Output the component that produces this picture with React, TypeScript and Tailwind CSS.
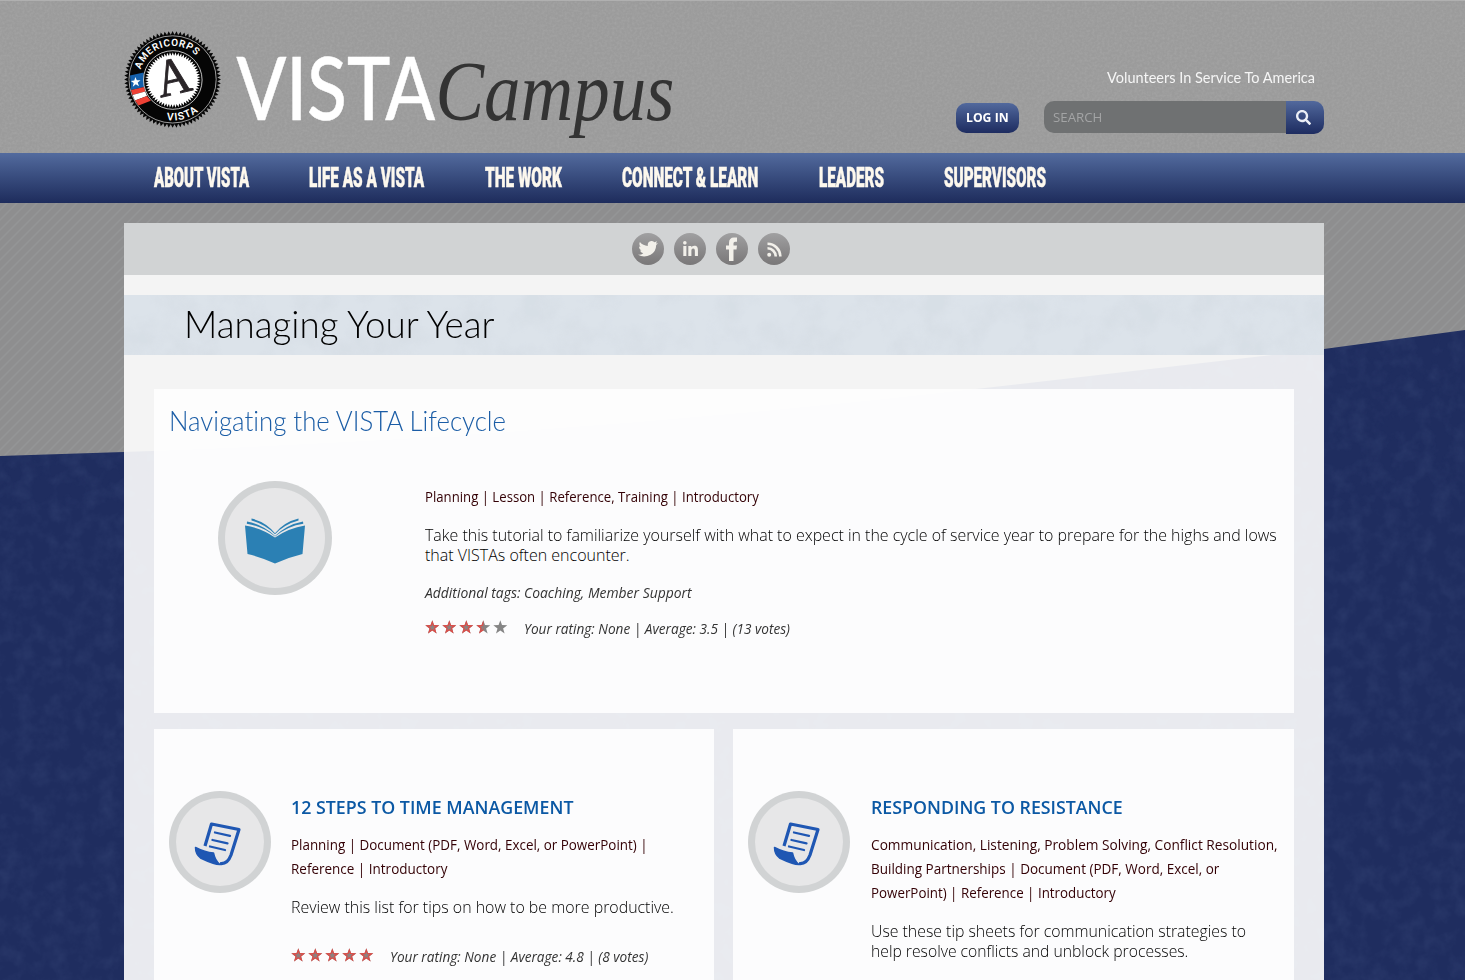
import React, { useLayoutEffect, useRef, useState } from "react";
import { FaLinkedinIn, FaSearch } from "react-icons/fa";

/** One line of text, condensed or widened to fill the given width. */
function Fit({ w, className = "", children }: { w: number; className?: string; children: string }) {
  const ref = useRef<HTMLSpanElement>(null);
  const [scale, setScale] = useState(1);
  useLayoutEffect(() => {
    if (ref.current) setScale(w / ref.current.offsetWidth);
  }, [w]);
  return (
    <span className={"block overflow-visible whitespace-nowrap " + className} style={{ width: w }}>
      <span ref={ref} className="inline-block origin-left" style={{ transform: `scaleX(${scale})` }}>
        {children}
      </span>
    </span>
  );
}

function teeth(cx: number, cy: number, r1: number, r2: number, n: number) {
  const pts: string[] = [];
  for (let i = 0; i < n * 2; i++) {
    const a = (Math.PI * i) / n;
    const r = i % 2 ? r1 : r2;
    pts.push(`${(cx + r * Math.cos(a)).toFixed(2)},${(cy + r * Math.sin(a)).toFixed(2)}`);
  }
  return pts.join(" ");
}

function Logo() {
  return (
    <svg width="580" height="130" viewBox="0 0 580 130" className="block shrink-0 overflow-visible">
      <defs>
        <path id="arcTop" d="M30.800 49.500A33.500 33.500 0 0 1 96 55" />
        <path id="arcBottom" d="M52 99.200A41.300 41.300 0 0 0 98 80" />
      </defs>
      <polygon points={teeth(62.6, 59.4, 44.8, 48.4, 76)} fill="#080808" />
      <circle cx="62.6" cy="59.4" r="43.6" fill="#050505" stroke="#ddd" strokeWidth="0.7" />
      <path d="M20 55.5L33.6 52.5L34.2 67L21 70Z" fill="#1560ab" />
      <path d="M21 70L34.2 67L35.2 71.6L22.6 75Z" fill="#ee4035" />
      <path d="M22.6 75L35.2 71.6L37 76L25 80.4Z" fill="#fff" />
      <path d="M25 80.4L37 76L40.8 80.8L28.6 85.4Z" fill="#ee4035" />
      <polygon points="25.3,57 26.8,60.2 30.5,60.2 27.7,62.5 29,66.3 25.8,64.2 22.8,66.8 23.7,63 20.8,61 24.3,60.6" fill="#fff" />
      <circle cx="62.8" cy="60" r="29.3" fill="#050505" stroke="#eee" strokeWidth="0.8" />
      <polygon points={teeth(62.8, 60, 24.3, 27.8, 60)} fill="#fff" />
      <text transform="translate(50.500 77.500) rotate(-13)" fontFamily="Liberation Serif, serif" fontSize="53" fill="#2a2528" stroke="#2a2528" strokeWidth="0.9" textLength="34" lengthAdjust="spacingAndGlyphs">A</text>
      <text fontFamily="Roboto, sans-serif" fontWeight="600" fontSize="10" fill="#fff" letterSpacing="0.6">
        <textPath href="#arcTop">AMERICORPS</textPath>
      </text>
      <text fontFamily="Roboto, sans-serif" fontWeight="600" fontSize="10.5" fill="#fff" letterSpacing="1">
        <textPath href="#arcBottom" startOffset="5">VISTA</textPath>
      </text>
      <text x="126.500" y="100" fontFamily="Lato, sans-serif" fontWeight="500" fontSize="87" fill="#fff" stroke="#fff" strokeWidth="0.5" textLength="198.500" lengthAdjust="spacingAndGlyphs">VISTA</text>
      <text x="325.500" y="100" fontFamily="Liberation Serif, serif" fontStyle="italic" fontSize="84" fill="#333" textLength="239" lengthAdjust="spacingAndGlyphs">Campus</text>
    </svg>
  );
}

function Backdrop() {
  return (
    <svg className="absolute inset-0 -z-10" width="1465" height="980" viewBox="0 0 1465 980">
      <defs>
        <pattern id="stripes" width="10" height="10" patternUnits="userSpaceOnUse">
          <rect width="10" height="10" fill="#8e8e8f" />
          <path d="M-1 11L11 -1M-1 1L1 -1M9 11L11 9" stroke="#949596" strokeWidth="1.5" />
        </pattern>
        <filter id="grunge" x="0" y="0" width="100%" height="100%">
          <feTurbulence type="fractalNoise" baseFrequency="0.06" numOctaves="5" seed="4" />
          <feColorMatrix values="0 0 0 0 0.2  0 0 0 0 0.28  0 0 0 0 0.5  1.6 0 0 0 -0.62" />
        </filter>
        <filter id="grain" x="0" y="0" width="100%" height="100%">
          <feTurbulence type="fractalNoise" baseFrequency="0.4" numOctaves="2" seed="2" />
          <feColorMatrix values="0 0 0 0 1  0 0 0 0 1  0 0 0 0 1  0.5 0 0 0 -0.17" />
        </filter>
        <clipPath id="hill">
          <path d="M0 456L124 452Q560 437 985 388L1324 349L1465 330V980H0Z" />
        </clipPath>
      </defs>
      <rect width="1465" height="980" fill="url(#stripes)" />
      <rect width="1465" height="153" fill="#9b9b9b" />
      <rect width="1465" height="153" filter="url(#grain)" opacity="0.3" />
      <rect width="1465" height="1" fill="#b0b0b0" />
      <g clipPath="url(#hill)">
        <rect width="1465" height="980" fill="#1f2d5f" />
        <rect width="1465" height="980" filter="url(#grunge)" opacity="0.13" />
      </g>
    </svg>
  );
}

function BandTexture() {
  return (
    <svg className="absolute inset-0 -z-10" width="1200" height="60">
      <filter id="paper" x="0" y="0" width="100%" height="100%">
        <feTurbulence type="fractalNoise" baseFrequency="0.03" numOctaves="5" seed="9" />
        <feColorMatrix values="0 0 0 0 0.62  0 0 0 0 0.67  0 0 0 0 0.73  3 0 0 0 -1.2" />
      </filter>
      <rect width="1200" height="60" filter="url(#paper)" opacity="0.3" />
    </svg>
  );
}

const STAR = "M7 0L8.7 4.9L14 5L9.8 8.2L11.3 13.2L7 10.2L2.7 13.2L4.2 8.2L0 5L5.3 4.9Z";

function Stars({ value }: { value: number }) {
  return (
    <svg width="84" height="14" viewBox="0 0 84 14" className="block shrink-0">
      <defs>
        <clipPath id={`rated${value * 10}`}>
          <rect width={value * 17 - 1} height="14" />
        </clipPath>
      </defs>
      {[0, 1, 2, 3, 4].map((i) => (
        <g key={i} transform={`translate(${i * 17 + 0.3} 0.2)`}>
          <path d={STAR} fill="#858585" />
        </g>
      ))}
      <g clipPath={`url(#rated${value * 10})`}>
        {[0, 1, 2, 3, 4].map((i) => (
          <g key={i} transform={`translate(${i * 17 + 0.3} 0.2)`}>
            <path d={STAR} fill="#dc4d48" />
            <path d={STAR} fill="#8b8382" transform="translate(3.5 3.6) scale(.5)" />
          </g>
        ))}
      </g>
    </svg>
  );
}

function Medallion({ size, children }: { size: number; children: React.ReactNode }) {
  return (
    <svg width={size} height={size} viewBox={`0 0 ${size} ${size}`} className="block shrink-0">
      <circle cx={size / 2} cy={size / 2} r={size / 2} fill="#d1d3d4" />
      <circle cx={size / 2} cy={size / 2} r={size / 2 - 7} fill="#e7e7e8" />
      {children}
    </svg>
  );
}

function BookIcon() {
  return (
    <g fill="#2b80b4">
      <path d="M27 44.5Q43 47 57 56.5Q71 47 87 44.5L84.5 73Q70 76.500 57 82.500Q44 76.500 29.500 73Z" />
      <path d="M29 40.500Q45 43.500 57 55Q69 43.500 85 40.500L85.300 42.800Q70 45 57 55.500Q44 45 28.800 42.800Z" />
      <path d="M33.500 37.500Q48 41 57 52.300Q66 41 80.500 37.500L80.500 39.500Q67 43 57 53.200Q47 43 33.500 39.500Z" />
    </g>
  );
}

function ScrollIcon() {
  return (
    <g fill="none" stroke="#1f57b3" strokeWidth="3.2" strokeLinejoin="round">
      <path d="M36 55L42.500 33L70 38.500L62 64Q58.500 73.500 51 72.500" />
      <path d="M46 41.500L61 44.800M43.500 49L58.500 52.300M41 55.500L56 59" strokeWidth="2.300" strokeLinecap="round" />
      <path d="M26.500 56.500Q36 61.500 44.500 62Q46 70 51 73.500Q45 73.500 31.500 67Q26.500 63 26.500 56.500Z" fill="#1f57b3" strokeWidth="1.500" />
    </g>
  );
}

function Social({ children }: { children: React.ReactNode }) {
  return (
    <a className="flex size-8 items-center justify-center rounded-full bg-linear-to-b from-[#a0a0a1] to-[#797778] text-[#f2f0ea]">
      {children}
    </a>
  );
}

const NAV: [string, number][] = [
  ["ABOUT VISTA", 95],
  ["LIFE AS A VISTA", 115],
  ["THE WORK", 77],
  ["CONNECT & LEARN", 136],
  ["LEADERS", 65],
  ["SUPERVISORS", 102],
];

type Line = [string, number];

function ResourceCard({ className, title, tags, text, rating }: { className: string; title: Line; tags: Line[]; text: Line[]; rating?: React.ReactNode }) {
  return (
    <article className={"flex h-[400px] bg-white/85 pl-[15px] pt-[62px] " + className}>
      <Medallion size={102}>
        <ScrollIcon />
      </Medallion>
      <div>
        <h3 className="text-[18px] font-semibold leading-8 text-[#0b58a4]">
          <Fit w={title[1]}>{title[0]}</Fit>
        </h3>
        <div className="mt-[10px] text-[14px] leading-6 text-[#330005]">
          {tags.map(([t, w]) => (
            <Fit key={t} w={w}>{t}</Fit>
          ))}
        </div>
        <div className="mt-4 text-[16px] font-light leading-5 text-black">
          {text.map(([t, w]) => (
            <Fit key={t} w={w}>{t}</Fit>
          ))}
        </div>
        {rating}
      </div>
    </article>
  );
}

export default function App() {
  return (
    <div className="relative isolate h-[980px] w-[1465px] overflow-hidden font-['Open_Sans',sans-serif] [font-variant-ligatures:none]">
      <Backdrop />
      <header className="flex h-[153px] justify-between pl-[110px] pr-[141px]">
        <div className="pt-5">
          <Logo />
        </div>
        <div className="flex flex-col items-end pt-[65px]">
          <div className="pr-[9px] font-['Lato',sans-serif] text-[15px] leading-6 text-white/90">
            <Fit w={208}>Volunteers In Service To America</Fit>
          </div>
          <div className="mt-3 flex items-start">
            <button className="mr-[25px] mt-[2px] flex h-[30px] w-[63px] items-center justify-center rounded-[10px] bg-linear-to-b from-[#52699d] to-[#1e2c60] text-[12.5px] font-bold text-white">
              <Fit w={43}>LOG IN</Fit>
            </button>
            <div className="flex h-8 w-[242px] items-center rounded-l-[10px] bg-[#6f7172] pl-[9px] pt-px text-[13px] text-[#a3a4a5]">
              <Fit w={49}>SEARCH</Fit>
            </div>
            <button className="flex h-[33px] w-[38px] items-center justify-center rounded-r-[10px] bg-linear-to-b from-[#52699d] to-[#1e2c60] pr-1 text-[15px] text-[#eceff6]">
              <FaSearch />
            </button>
          </div>
        </div>
      </header>

      <nav className="flex h-[50px] gap-[60.4px] bg-linear-to-b from-[#536b9e] to-[#1e2c5c] pl-[154px] font-['Roboto',sans-serif] text-[27px] font-black leading-[50px] text-[#fdf8ee]">
        {NAV.map(([t, w]) => (
          <Fit key={t} w={w} className="[-webkit-text-stroke:0.5px_#fdf8ee]">{t}</Fit>
        ))}
      </nav>

      <main className="ml-[124px] mt-5 h-[757px] w-[1200px] bg-white/90">
        <div className="flex h-[52px] gap-[10px] bg-[#d1d3d4] pl-[508px] pt-[10px]">
          <Social>
            <svg width="20" height="18" viewBox="0 0 20 18" fill="currentColor">
              <path d="M0 14.800Q3.300 15 5.300 13.200Q2.600 12.800 2 10.500H3.500Q.9 9.200 1 6.500L2.600 7Q.6 4.600 1.900 2.100Q5 5.800 9.800 6Q9.300 1.300 13.200 .9Q15 .8 16.400 2.200L19 1.300L17.900 3.500L20 3.200L18.200 5.100Q18 12 12.600 14.800Q6 18.200 0 14.800Z" />
            </svg>
          </Social>
          <Social>
            <FaLinkedinIn size={17} />
          </Social>
          <Social>
            <svg width="14" height="24" viewBox="0 0 14 24" fill="currentColor">
              <path d="M4 24V12.500H1V8.500H4V6Q4 .5 9 .5H12V4.700H10Q8.500 4.700 8.500 6.300V8.500H12L11.500 12.500H8.500V24Z" />
            </svg>
          </Social>
          <Social>
            <svg width="15" height="15" viewBox="0 0 15 15" fill="none" stroke="currentColor" strokeWidth="2.600">
              <circle cx="2.200" cy="12.800" r="2" fill="currentColor" stroke="none" />
              <path d="M.5 6.300A8.200 8.200 0 0 1 8.700 14.600M.5 1.700A12.800 12.800 0 0 1 13.300 14.600" />
            </svg>
          </Social>
        </div>

        <div className="relative isolate mt-5 h-[60px] bg-[#dce3ea] pl-[60px]">
          <BandTexture />
          <h1 className="font-['Lato',sans-serif] text-[37px] font-light leading-[58px] text-black">
            <Fit w={311}>Managing Your Year</Fit>
          </h1>
        </div>

        <section className="mx-[30px] mt-[34px] h-[324px] bg-white/85 px-[15px] pt-[14px]">
          <h2 className="font-['Lato',sans-serif] text-[27px] font-light leading-9 text-[#1b5da6]">
            <Fit w={337}>Navigating the VISTA Lifecycle</Fit>
          </h2>
          <div className="mt-[42px] flex pl-[49px]">
            <Medallion size={114}>
              <BookIcon />
            </Medallion>
            <div className="ml-[93px] pt-1">
              <div className="text-[14px] leading-6 text-[#330005]">
                <Fit w={334}>Planning | Lesson | Reference, Training | Introductory</Fit>
              </div>
              <div className="mt-4 text-[16px] font-light leading-5 text-black">
                <Fit w={852}>Take this tutorial to familiarize yourself with what to expect in the cycle of service year to prepare for the highs and lows</Fit>
                <Fit w={205}>that VISTAs often encounter.</Fit>
              </div>
              <div className="mt-4 text-[14px] italic leading-6 text-[#333]">
                <Fit w={267}>Additional tags: Coaching, Member Support</Fit>
              </div>
              <div className="mt-3 flex items-start gap-[15px] text-[14px] italic leading-6 text-[#333]">
                <div className="pt-[3px]">
                  <Stars value={3.5} />
                </div>
                <Fit w={266}>Your rating: None | Average: 3.5 | (13 votes)</Fit>
              </div>
            </div>
          </div>
        </section>

        <div className="mx-[30px] mt-4 flex h-[251px] gap-[19px] overflow-hidden">
          <ResourceCard
            className="w-[560px] gap-5"
            title={["12 STEPS TO TIME MANAGEMENT", 282]}
            tags={[
              ["Planning | Document (PDF, Word, Excel, or PowerPoint) |", 357],
              ["Reference | Introductory", 156],
            ]}
            text={[["Review this list for tips on how to be more productive.", 383]]}
            rating={
              <div className="mt-7 flex items-start gap-[15px] text-[14px] italic leading-6 text-[#333]">
                <div className="pt-[3px]">
                  <Stars value={5} />
                </div>
                <Fit w={258}>Your rating: None | Average: 4.8 | (8 votes)</Fit>
              </div>
            }
          />
          <ResourceCard
            className="w-[561px] gap-[21px]"
            title={["RESPONDING TO RESISTANCE", 252]}
            tags={[
              ["Communication, Listening, Problem Solving, Conflict Resolution,", 407],
              ["Building Partnerships | Document (PDF, Word, Excel, or", 348],
              ["PowerPoint) | Reference | Introductory", 245],
            ]}
            text={[
              ["Use these tip sheets for communication strategies to", 375],
              ["help resolve conflicts and unblock processes.", 317],
            ]}
          />
        </div>
      </main>
    </div>
  );
}
